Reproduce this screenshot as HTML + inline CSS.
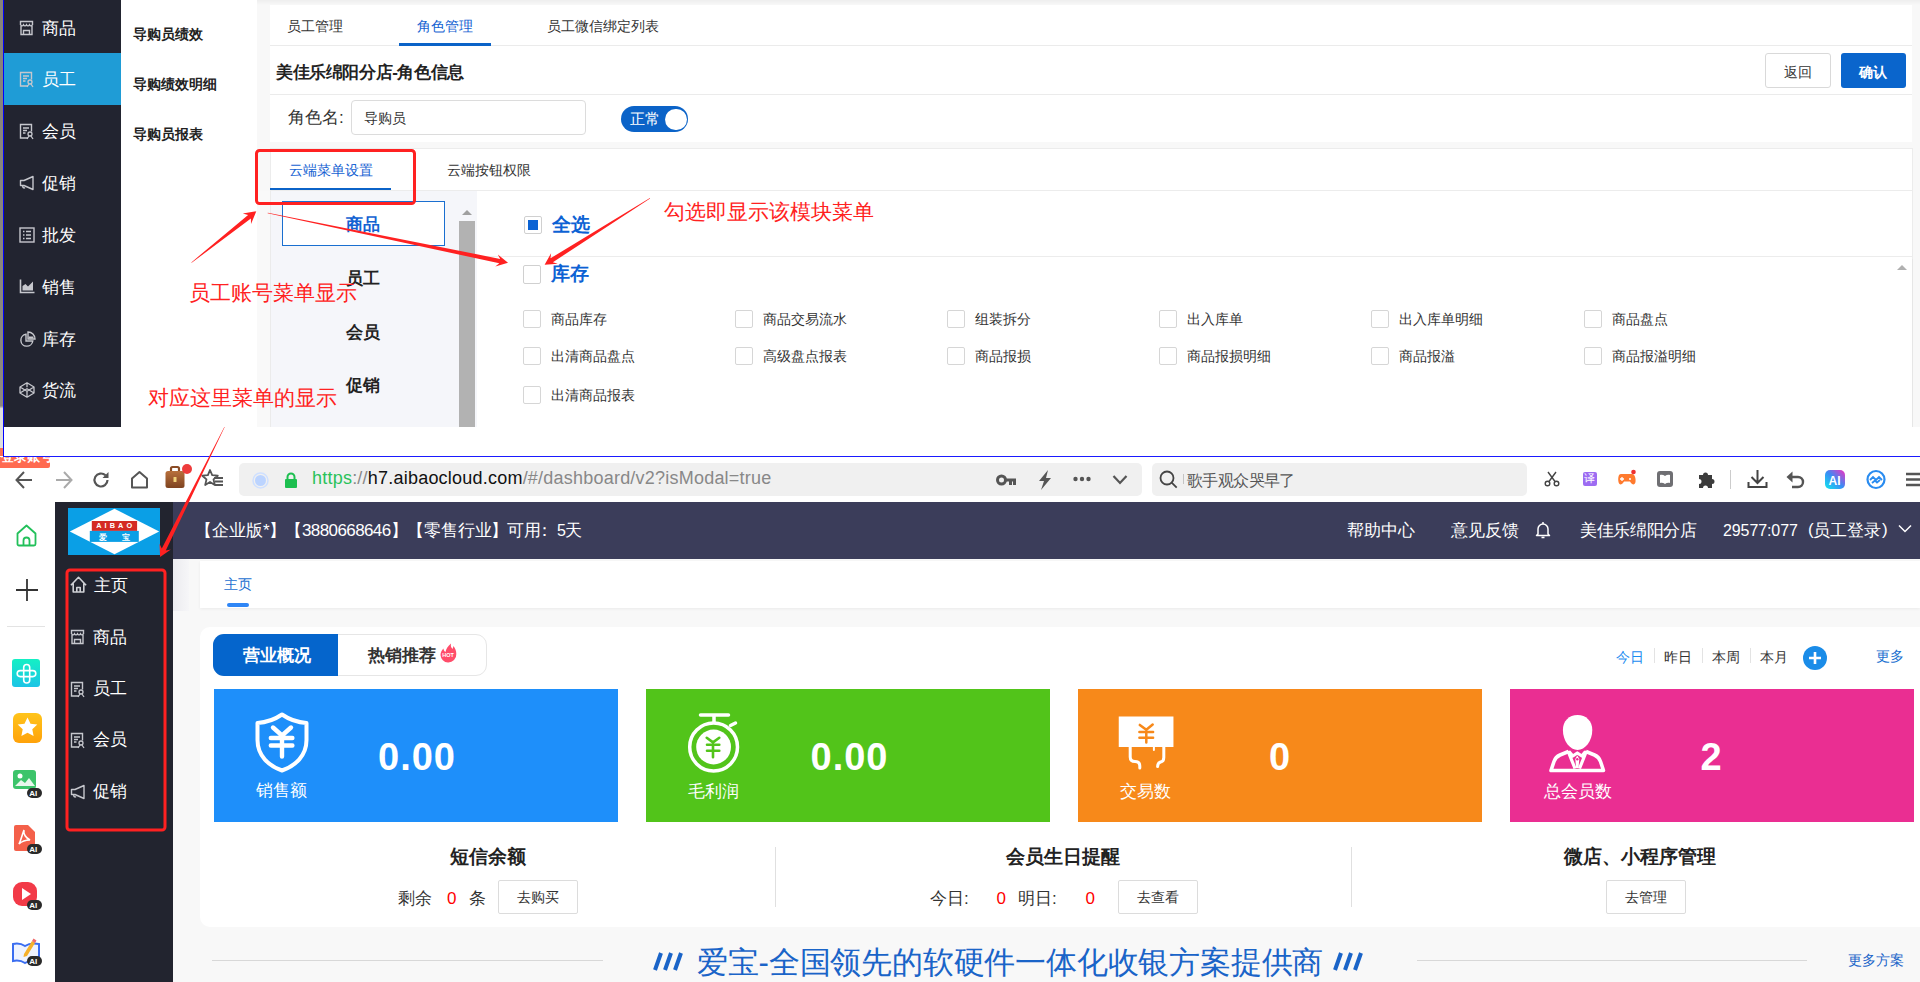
<!DOCTYPE html>
<html><head><meta charset="utf-8">
<style>
*{box-sizing:border-box;margin:0;padding:0}
html,body{width:1920px;height:982px;overflow:hidden;background:#fff;font-family:"Liberation Sans",sans-serif;color:#333}
.a{position:absolute;white-space:nowrap}
.t{position:absolute;white-space:nowrap;line-height:1}
svg{position:absolute;overflow:visible}
</style></head><body>

<!-- ============ TOP SCREENSHOT ============ -->
<div class="a" style="left:0;top:0;width:3px;height:456px;background:linear-gradient(#86827a 0,#8c877e 89%,#dedede 89.6%,#dedede 98.2%,#ff6a50 98.2%)"></div>
<div class="a" style="left:3px;top:0;width:1px;height:457px;background:#0000ff"></div>
<div class="a" style="left:3px;top:456px;width:1917px;height:1px;background:#1a1aff"></div>

<!-- dark sidebar -->
<div class="a" style="left:4px;top:0;width:117px;height:427px;background:#222430"></div>
<div class="a" style="left:4px;top:53px;width:117px;height:52px;background:#1f9cd6"></div>
<svg style="left:19px;top:20px" width="16" height="16" viewBox="0 0 16 16"><path d="M1.5 1.5h12v3.2c-1 1.6-2.2 1.6-3 0-0.8 1.6-2.2 1.6-3 0-0.8 1.6-2.2 1.6-3 0-0.8 1.6-2 1.6-3 0z M2 6v8.5h11V6 M4.5 14.5v-4h6v4" fill="none" stroke="#c6c7cd" stroke-width="1.4"/></svg>
<div class="t" style="left:42px;top:20px;font-size:17px;color:#fff">商品</div>
<svg style="left:19px;top:71px" width="16" height="16" viewBox="0 0 16 16"><path d="M9 15H1.5V1.5h11v7 M4 5h6 M4 7.5h4 M4 10h2.5" fill="none" stroke="#c6c7cd" stroke-width="1.4"/><circle cx="11" cy="11" r="2" fill="none" stroke="#c6c7cd" stroke-width="1.3"/><path d="M8 16l2-3 M14 16l-2-3" stroke="#c6c7cd" stroke-width="1.3"/></svg>
<div class="t" style="left:42px;top:71px;font-size:17px;color:#fff">员工</div>
<svg style="left:19px;top:123px" width="16" height="16" viewBox="0 0 16 16"><path d="M9 15H1.5V1.5h11v7 M4 5h6 M4 7.5h4 M4 10h2.5" fill="none" stroke="#c6c7cd" stroke-width="1.4"/><circle cx="11" cy="11" r="2" fill="none" stroke="#c6c7cd" stroke-width="1.3"/><path d="M8 16l2-3 M14 16l-2-3" stroke="#c6c7cd" stroke-width="1.3"/></svg>
<div class="t" style="left:42px;top:123px;font-size:17px;color:#fff">会员</div>
<svg style="left:19px;top:175px" width="16" height="16" viewBox="0 0 16 16"><path d="M1.5 5.5h3.5L14 1.5v13L5 10.5H1.5z M4 10.5c-1 2 1 3 2 2" fill="none" stroke="#c6c7cd" stroke-width="1.4" stroke-linejoin="round"/></svg>
<div class="t" style="left:42px;top:175px;font-size:17px;color:#fff">促销</div>
<svg style="left:19px;top:227px" width="16" height="16" viewBox="0 0 16 16"><rect x="1" y="1" width="14" height="14" fill="none" stroke="#c6c7cd" stroke-width="1.4"/><path d="M4 4.5h1.5M7 4.5h5M4 8h1.5M7 8h5M4 11.5h1.5M7 11.5h5" stroke="#c6c7cd" stroke-width="1.4"/></svg>
<div class="t" style="left:42px;top:227px;font-size:17px;color:#fff">批发</div>
<svg style="left:19px;top:279px" width="16" height="16" viewBox="0 0 16 16"><path d="M1.5 0.5v13h14" fill="none" stroke="#c6c7cd" stroke-width="1.6"/><path d="M3.5 11.5V7l3-2 2.5 2.5 2-2 3-3v9z" fill="#c6c7cd"/></svg>
<div class="t" style="left:42px;top:279px;font-size:17px;color:#fff">销售</div>
<svg style="left:19px;top:331px" width="16" height="16" viewBox="0 0 16 16"><path d="M7 3.2A6 6 0 1 0 13.8 10H7z" fill="none" stroke="#c6c7cd" stroke-width="1.4"/><path d="M9 1v7h7A7 7 0 0 0 9 1z" fill="none" stroke="#c6c7cd" stroke-width="1.4"/><path d="M9.5 5.5h5v2h-5z" fill="#c6c7cd"/></svg>
<div class="t" style="left:42px;top:331px;font-size:17px;color:#fff">库存</div>
<svg style="left:19px;top:382px" width="16" height="16" viewBox="0 0 16 16"><path d="M8 0.8l7 4.2v6L8 15.2 1 11V5z M1 5l7 4.2 7-4.2 M8 0.8v4.5 M1 11l7-4.3 7 4.3 M8 9.2v6" fill="none" stroke="#c6c7cd" stroke-width="1.3" stroke-linejoin="round"/></svg>
<div class="t" style="left:42px;top:382px;font-size:17px;color:#fff">货流</div>

<!-- submenu -->
<div class="t" style="left:133px;top:27px;font-size:14px;color:#222;font-weight:bold">导购员绩效</div>
<div class="t" style="left:133px;top:77px;font-size:14px;color:#222;font-weight:bold">导购绩效明细</div>
<div class="t" style="left:133px;top:127px;font-size:14px;color:#222;font-weight:bold">导购员报表</div>

<!-- gray content bg -->
<div class="a" style="left:257px;top:0;width:1663px;height:427px;background:#f8f8f8"></div>
<div class="a" style="left:257px;top:0;width:1663px;height:5px;background:linear-gradient(#eee,#f8f8f8)"></div>

<!-- panel 1 -->
<div class="a" style="left:270px;top:5px;width:1642px;height:137px;background:#fff"></div>
<div class="a" style="left:270px;top:45px;width:1642px;height:1px;background:#ebebeb"></div>
<div class="a" style="left:270px;top:94px;width:1642px;height:1px;background:#ebebeb"></div>
<div class="t" style="left:287px;top:19px;font-size:14px;color:#333">员工管理</div>
<div class="t" style="left:417px;top:19px;font-size:14px;color:#1462d2">角色管理</div>
<div class="t" style="left:547px;top:19px;font-size:14px;color:#333">员工微信绑定列表</div>
<div class="a" style="left:399px;top:43px;width:92px;height:3px;background:#0b63c8"></div>
<div class="t" style="left:276px;top:63.5px;font-size:17px;letter-spacing:-0.4px;color:#222;font-weight:bold">美佳乐绵阳分店-角色信息</div>
<div class="a" style="left:1765px;top:53px;width:66px;height:35px;border:1px solid #d9d9d9;border-radius:3px;background:#fff"></div>
<div class="t" style="left:1783.5px;top:64.5px;font-size:14px;color:#333">返回</div>
<div class="a" style="left:1841px;top:53px;width:65px;height:35px;border-radius:3px;background:#0a65cc"></div>
<div class="t" style="left:1858.5px;top:64.5px;font-size:14px;color:#fff;font-weight:600">确认</div>
<div class="t" style="left:288px;top:109px;font-size:17px;color:#333">角色名:</div>
<div class="a" style="left:351px;top:100px;width:235px;height:35px;border:1px solid #dcdcdc;border-radius:4px;background:#fff"></div>
<div class="t" style="left:364px;top:111px;font-size:14px;color:#333">导购员</div>
<div class="a" style="left:621px;top:106px;width:67px;height:26px;border-radius:13px;background:#0b63c8"></div>
<div class="a" style="left:665px;top:108.5px;width:21.5px;height:21.5px;border-radius:11px;background:#fff"></div>
<div class="t" style="left:629.5px;top:111px;font-size:15px;color:#fff">正常</div>

<!-- panel 2 -->
<div class="a" style="left:270px;top:148px;width:1643px;height:279px;background:#fff;border:1px solid #ececec;border-bottom:none"></div>
<div class="a" style="left:270px;top:190px;width:1642px;height:1px;background:#ececec"></div>
<div class="t" style="left:289px;top:162.5px;font-size:14px;color:#1462d2">云端菜单设置</div>
<div class="t" style="left:447px;top:162.5px;font-size:14px;color:#333">云端按钮权限</div>
<div class="a" style="left:270px;top:188px;width:121px;height:2px;background:#0b63c8"></div>
<!-- left module list -->
<div class="a" style="left:257px;top:191px;width:13px;height:236px;background:#f9f9f9"></div>
<div class="a" style="left:270px;top:191px;width:207px;height:236px;background:#f5f6fa;border-left:1px solid #ebebeb"></div>
<div class="a" style="left:282px;top:201px;width:163px;height:45px;border:1px solid #1a6fd0;background:#fff"></div>
<div class="t" style="left:346px;top:216px;font-size:17px;color:#1462d2;font-weight:bold">商品</div>
<div class="t" style="left:346px;top:270px;font-size:17px;color:#222;font-weight:bold">员工</div>
<div class="t" style="left:346px;top:324px;font-size:17px;color:#222;font-weight:bold">会员</div>
<div class="t" style="left:346px;top:377px;font-size:17px;color:#222;font-weight:bold">促销</div>
<div class="a" style="left:459px;top:221px;width:16px;height:206px;background:#b2b2b2"></div>
<svg style="left:459px;top:205px" width="16" height="12"><path d="M3 10 L8 5 L13 10Z" fill="#a0a0a0"/></svg>

<div class="a" style="left:524px;top:216px;width:18px;height:18px;border:1px solid #d0d0d0;border-radius:2px;background:#fff"></div>
<div class="a" style="left:528px;top:220px;width:10px;height:10px;background:#0b63d4"></div>
<div class="t" style="left:552px;top:215px;font-size:19px;color:#0d62d4;font-weight:bold">全选</div>
<div class="a" style="left:477px;top:256px;width:1435px;height:1px;background:#ececec"></div>
<div class="a" style="left:523px;top:265px;width:18px;height:19px;border:1px solid #d0d0d0;border-radius:2px;background:#fff"></div>
<div class="t" style="left:551px;top:264px;font-size:19px;color:#0d62d4;font-weight:bold">库存</div>
<div class="a" style="left:523px;top:310px;width:18px;height:18px;border:1px solid #d6d6d6;border-radius:2px;background:#fff"></div>
<div class="t" style="left:551px;top:312px;font-size:14px;color:#333">商品库存</div>
<div class="a" style="left:735px;top:310px;width:18px;height:18px;border:1px solid #d6d6d6;border-radius:2px;background:#fff"></div>
<div class="t" style="left:763px;top:312px;font-size:14px;color:#333">商品交易流水</div>
<div class="a" style="left:947px;top:310px;width:18px;height:18px;border:1px solid #d6d6d6;border-radius:2px;background:#fff"></div>
<div class="t" style="left:975px;top:312px;font-size:14px;color:#333">组装拆分</div>
<div class="a" style="left:1159px;top:310px;width:18px;height:18px;border:1px solid #d6d6d6;border-radius:2px;background:#fff"></div>
<div class="t" style="left:1187px;top:312px;font-size:14px;color:#333">出入库单</div>
<div class="a" style="left:1371px;top:310px;width:18px;height:18px;border:1px solid #d6d6d6;border-radius:2px;background:#fff"></div>
<div class="t" style="left:1399px;top:312px;font-size:14px;color:#333">出入库单明细</div>
<div class="a" style="left:1584px;top:310px;width:18px;height:18px;border:1px solid #d6d6d6;border-radius:2px;background:#fff"></div>
<div class="t" style="left:1612px;top:312px;font-size:14px;color:#333">商品盘点</div>
<div class="a" style="left:523px;top:347px;width:18px;height:18px;border:1px solid #d6d6d6;border-radius:2px;background:#fff"></div>
<div class="t" style="left:551px;top:349px;font-size:14px;color:#333">出清商品盘点</div>
<div class="a" style="left:735px;top:347px;width:18px;height:18px;border:1px solid #d6d6d6;border-radius:2px;background:#fff"></div>
<div class="t" style="left:763px;top:349px;font-size:14px;color:#333">高级盘点报表</div>
<div class="a" style="left:947px;top:347px;width:18px;height:18px;border:1px solid #d6d6d6;border-radius:2px;background:#fff"></div>
<div class="t" style="left:975px;top:349px;font-size:14px;color:#333">商品报损</div>
<div class="a" style="left:1159px;top:347px;width:18px;height:18px;border:1px solid #d6d6d6;border-radius:2px;background:#fff"></div>
<div class="t" style="left:1187px;top:349px;font-size:14px;color:#333">商品报损明细</div>
<div class="a" style="left:1371px;top:347px;width:18px;height:18px;border:1px solid #d6d6d6;border-radius:2px;background:#fff"></div>
<div class="t" style="left:1399px;top:349px;font-size:14px;color:#333">商品报溢</div>
<div class="a" style="left:1584px;top:347px;width:18px;height:18px;border:1px solid #d6d6d6;border-radius:2px;background:#fff"></div>
<div class="t" style="left:1612px;top:349px;font-size:14px;color:#333">商品报溢明细</div>
<div class="a" style="left:523px;top:386px;width:18px;height:18px;border:1px solid #d6d6d6;border-radius:2px;background:#fff"></div>
<div class="t" style="left:551px;top:388px;font-size:14px;color:#333">出清商品报表</div>
<div class="a" style="left:1912px;top:259px;width:1px;height:168px;background:#e6e6e6"></div>
<svg style="left:1895px;top:262px" width="14" height="10"><path d="M2 8 L7 3 L12 8Z" fill="#b0b0b0"/></svg>

<!-- ============ BROWSER ============ -->
<div class="a" style="left:0;top:457px;width:1920px;height:45px;background:#fff"></div>
<div class="a" style="left:0;top:457px;width:50px;height:10.5px;background:#ff6a50;border-radius:0 0 2px 0;overflow:hidden"><div class="t" style="left:1px;top:-6px;font-size:12.5px;font-weight:bold;color:#fff">登录账号</div></div>
<!-- nav icons -->
<svg style="left:14px;top:469px" width="20" height="22" viewBox="0 0 20 22"><path d="M18 11H3 M10 3L2.5 11l7.5 8" fill="none" stroke="#555" stroke-width="2"/></svg>
<svg style="left:54px;top:469px" width="20" height="22" viewBox="0 0 20 22"><path d="M2 11h15 M10 3l7.5 8L10 19" fill="none" stroke="#aaa" stroke-width="2"/></svg>
<svg style="left:91px;top:470px" width="20" height="20" viewBox="0 0 20 20"><path d="M16.5 10a6.5 6.5 0 1 1-2-4.7" fill="none" stroke="#555" stroke-width="2.2"/><path d="M17.5 2v6h-6z" fill="#555"/></svg>
<svg style="left:130px;top:470px" width="20" height="20" viewBox="0 0 20 20"><path d="M2 8.5L9.5 2 17 8.5V17.5H2z" fill="none" stroke="#555" stroke-width="2" stroke-linejoin="round"/></svg>
<svg style="left:164px;top:463px" width="30" height="28" viewBox="0 0 30 28"><defs><linearGradient id="bc" x1="0" y1="0" x2="0" y2="1"><stop offset="0" stop-color="#b8703c"/><stop offset="1" stop-color="#7e4320"/></linearGradient></defs><path d="M7 9V5.5Q7 4 8.5 4h5Q15 4 15 5.5V9" fill="none" stroke="#8a4c26" stroke-width="2.2"/><rect x="1.5" y="8" width="19" height="17" rx="2.5" fill="url(#bc)"/><rect x="9.5" y="14" width="3" height="5" rx="0.5" fill="#f2d27a"/><circle cx="23" cy="6" r="5" fill="#ee3b3b"/></svg>
<svg style="left:202px;top:469px" width="22" height="20" viewBox="0 0 22 20"><path d="M8 1l2.2 5.2 5.6.5-4.3 3.7 1.3 5.6L8 13 3.2 16l1.3-5.6L0.3 6.7l5.6-.5z" fill="none" stroke="#555" stroke-width="1.8" stroke-linejoin="round"/><path d="M12 9h9 M13 12.5h8 M13 16h8" stroke="#555" stroke-width="2"/></svg>
<!-- url bar -->
<div class="a" style="left:239px;top:463px;width:903px;height:33px;background:#f0f0f0;border-radius:5px"></div>
<svg style="left:252px;top:472px" width="17" height="17" viewBox="0 0 17 17"><circle cx="8.5" cy="8.5" r="7.5" fill="none" stroke="#cfe0ff" stroke-width="1.5"/><circle cx="8.5" cy="8.5" r="5.5" fill="#bcd4ff"/></svg>
<svg style="left:284px;top:472px" width="14" height="16" viewBox="0 0 14 16"><path d="M3.5 7V5a3.5 3.5 0 0 1 7 0v2" fill="none" stroke="#1dbf50" stroke-width="2"/><rect x="1" y="7" width="12" height="9" rx="1" fill="#1dbf50"/></svg>
<div class="t" style="left:312px;top:469px;font-size:18px;letter-spacing:0.22px"><span style="color:#2ac25a">https</span><span style="color:#888">://</span><span style="color:#111">h7.aibaocloud.com</span><span style="color:#888">/#/dashboard/v2?isModal=true</span></div>
<svg style="left:996px;top:474px" width="21" height="12" viewBox="0 0 21 12"><circle cx="5.5" cy="6" r="4" fill="none" stroke="#555" stroke-width="3"/><path d="M9 6h11 M14.5 6v5 M18.5 6v5" stroke="#555" stroke-width="3"/></svg>
<svg style="left:1037px;top:470px" width="16" height="20" viewBox="0 0 16 20"><path d="M11 0L2 11h5l-3 9 10-12H9z" fill="#555"/></svg>
<svg style="left:1073px;top:475px" width="18" height="8" viewBox="0 0 18 8"><circle cx="2.5" cy="4" r="2.2" fill="#555"/><circle cx="9" cy="4" r="2.2" fill="#555"/><circle cx="15.5" cy="4" r="2.2" fill="#555"/></svg>
<svg style="left:1112px;top:474px" width="16" height="12" viewBox="0 0 16 12"><path d="M1.5 2l6.5 7 6.5-7" fill="none" stroke="#555" stroke-width="2.2"/></svg>
<!-- search -->
<div class="a" style="left:1152px;top:463px;width:375px;height:33px;background:#f0f0f0;border-radius:5px"></div>
<svg style="left:1159px;top:470px" width="20" height="20" viewBox="0 0 20 20"><circle cx="8" cy="8" r="6.5" fill="none" stroke="#444" stroke-width="1.8"/><path d="M12.7 12.7l5 5" stroke="#444" stroke-width="1.8"/></svg>
<div class="a" style="left:1183px;top:474px;width:1px;height:10px;background:#c4c4c4"></div>
<div class="t" style="left:1187px;top:472.5px;font-size:16px;letter-spacing:-0.6px;color:#555">歌手观众哭早了</div>
<!-- right toolbar icons -->
<svg style="left:1544px;top:471px" width="16" height="16" viewBox="0 0 16 16"><circle cx="3.5" cy="12.5" r="2.3" fill="none" stroke="#444" stroke-width="1.4"/><circle cx="12.5" cy="12.5" r="2.3" fill="none" stroke="#444" stroke-width="1.4"/><path d="M5 10.5L12 1 M11 10.5L4 1" stroke="#444" stroke-width="1.4"/></svg>
<div class="a" style="left:1583px;top:472px;width:14px;height:14px;background:#9d6cf2;border-radius:2px"></div>
<div class="t" style="left:1584px;top:473px;font-size:11px;color:#fff">译</div>
<svg style="left:1617px;top:469px" width="20" height="18" viewBox="0 0 20 18"><path d="M4 5h11c3 0 4 5 3.5 8-.5 3-3 3-4.5 1l-1-1.5H7L6 14c-1.5 2-4 2-4.5-1C1 10 1 5 4 5z" fill="#ff7a2e"/><path d="M5 8v4 M3 10h4" stroke="#fff" stroke-width="1.3"/><circle cx="13" cy="10" r="1" fill="#fff"/><circle cx="16.5" cy="3" r="2.3" fill="#ee3030"/></svg>
<svg style="left:1657px;top:471px" width="16" height="16" viewBox="0 0 16 16"><rect x="0" y="0" width="16" height="16" rx="3" fill="#6f6f73"/><path d="M3 4c2-.5 3.5 0 5 1 1.5-1 3-1.5 5-1v8c-2-.5-3.5 0-5 1-1.5-1-3-1.5-5-1z" fill="#fff"/></svg>
<svg style="left:1696px;top:470px" width="19" height="19" viewBox="0 0 19 19"><path d="M3 5h4a2.5 2.5 0 1 1 5 0h4v4a2.5 2.5 0 1 1 0 5v4h-4a2.5 2.5 0 1 0-5 0H3v-4a2.5 2.5 0 1 0 0-5z" fill="#3c3c3c"/></svg>
<div class="a" style="left:1730px;top:470px;width:1px;height:19px;background:#ccc"></div>
<svg style="left:1747px;top:469px" width="21" height="20" viewBox="0 0 21 20"><path d="M10.5 1v12 M4.5 8l6 6 6-6 M1.5 13v5h18v-5" fill="none" stroke="#444" stroke-width="2"/></svg>
<svg style="left:1786px;top:470px" width="19" height="19" viewBox="0 0 19 19"><path d="M5 7h7a5 5 0 0 1 0 10H6" fill="none" stroke="#555" stroke-width="2.4"/><path d="M6.5 1.5v11L0.5 7z" fill="#555"/></svg>
<svg style="left:1825px;top:470px" width="20" height="19" viewBox="0 0 20 19"><defs><linearGradient id="ai" x1="0" y1="1" x2="1" y2="0"><stop offset="0" stop-color="#10e8ee"/><stop offset="0.5" stop-color="#3a8cf5"/><stop offset="1" stop-color="#f62fc0"/></linearGradient></defs><rect width="20" height="19" rx="5" fill="url(#ai)"/><text x="3.5" y="14.5" font-family="Liberation Sans" font-weight="bold" font-size="12" fill="#fff">AI</text></svg>
<svg style="left:1866px;top:470px" width="20" height="19" viewBox="0 0 20 19"><circle cx="10" cy="9.5" r="8.5" fill="none" stroke="#2a8cf0" stroke-width="2.2"/><path d="M4 10l3-3 3 3 3-3 3 3 M6 13l3-2.5 2 2 3-2.5" fill="none" stroke="#2a8cf0" stroke-width="1.8"/></svg>
<svg style="left:1906px;top:472px" width="14" height="15" viewBox="0 0 14 15"><path d="M0 2h14 M0 7.5h14 M0 13h14" stroke="#555" stroke-width="2.4"/></svg>

<!-- browser left sidebar -->
<div class="a" style="left:0;top:502px;width:55px;height:480px;background:#fff"></div>
<svg style="left:16px;top:524px" width="21" height="23" viewBox="0 0 21 23"><path d="M1.5 9.5L10.5 1.5l9 8V20a1.5 1.5 0 0 1-1.5 1.5H3A1.5 1.5 0 0 1 1.5 20z M7.5 21.5v-5a3 3 0 0 1 6 0v5" fill="none" stroke="#22c05a" stroke-width="1.8" stroke-linejoin="round"/></svg>
<svg style="left:16px;top:579px" width="22" height="22" viewBox="0 0 22 22"><path d="M11 0v22 M0 11h22" stroke="#333" stroke-width="1.8"/></svg>
<div class="a" style="left:7px;top:626px;width:38px;height:1px;background:#e3e3e3"></div>
<svg style="left:12px;top:659px" width="28" height="28" viewBox="0 0 28 28"><defs><linearGradient id="tl" x1="0" y1="0" x2="0" y2="1"><stop offset="0" stop-color="#14f0c4"/><stop offset="1" stop-color="#1cc4e6"/></linearGradient></defs><rect width="28" height="28" rx="3" fill="url(#tl)"/><rect x="11.7" y="5.5" width="6" height="18.5" rx="3" fill="none" stroke="#fff" stroke-width="1.6"/><rect x="5.2" y="11.6" width="18.6" height="6" rx="3" fill="none" stroke="#fff" stroke-width="1.6"/></svg>
<svg style="left:13px;top:713px" width="29" height="30" viewBox="0 0 29 30"><defs><linearGradient id="st" x1="0" y1="0" x2="0" y2="1"><stop offset="0" stop-color="#ffc41a"/><stop offset="1" stop-color="#ffa20a"/></linearGradient></defs><rect width="29" height="30" rx="6" fill="url(#st)"/><path d="M14.5 4.5l3 6.3 6.8.8-5 4.7 1.3 6.8-6.1-3.4-6.1 3.4 1.3-6.8-5-4.7 6.8-.8z" fill="#fff"/></svg>
<svg style="left:12px;top:769px" width="31" height="31" viewBox="0 0 31 31"><rect x="1" y="1" width="23" height="19" rx="3" fill="#3cc46a"/><circle cx="8" cy="7" r="2.5" fill="#fff"/><path d="M3 17l6-6 4 3 4-5 6 8z" fill="#e8f7ec"/><rect x="15" y="19" width="15" height="10" rx="5" fill="#2a2a2a"/><text x="17.3" y="27.3" font-family="Liberation Sans" font-weight="bold" font-size="8" fill="#fff">AI</text></svg>
<svg style="left:12px;top:825px" width="31" height="31" viewBox="0 0 31 31"><path d="M4 0h12l7 7v17a2 2 0 0 1-2 2H4a2 2 0 0 1-2-2V2a2 2 0 0 1 2-2z" fill="#f4604a"/><path d="M12 5c-1 4 2 8 6 10-4 0-8 1-11 4 2-4 3-9 5-14z" fill="none" stroke="#fff" stroke-width="1.6"/><rect x="15" y="19" width="15" height="10" rx="5" fill="#2a2a2a"/><text x="17.3" y="27.3" font-family="Liberation Sans" font-weight="bold" font-size="8" fill="#fff">AI</text></svg>
<svg style="left:12px;top:881px" width="31" height="31" viewBox="0 0 31 31"><rect x="1" y="1" width="24" height="24" rx="9" fill="#f23a48"/><path d="M10 7l9 6-9 6z" fill="#fff"/><rect x="15" y="19" width="15" height="10" rx="5" fill="#2a2a2a"/><text x="17.3" y="27.3" font-family="Liberation Sans" font-weight="bold" font-size="8" fill="#fff">AI</text></svg>
<svg style="left:12px;top:937px" width="31" height="31" viewBox="0 0 31 31"><path d="M1 7c5-1 9 0 12 2 3-2 8-3 14-2v17c-6-1-11 0-14 2-3-2-7-3-12-2z" fill="#eef3ff" stroke="#3a6df0" stroke-width="2"/><path d="M12 17l8-13 3 2-8 13-3.5 1z" fill="#f5b02a"/><path d="M20 4l1.5-2.5 3 2L23 6z" fill="#f06a6a"/><rect x="15" y="19" width="15" height="10" rx="5" fill="#2a2a2a"/><text x="17.3" y="27.3" font-family="Liberation Sans" font-weight="bold" font-size="8" fill="#fff">AI</text></svg>

<!-- app sidebar -->
<div class="a" style="left:55px;top:502px;width:118px;height:480px;background:#22242f"></div>
<!-- logo -->
<svg style="left:68px;top:508px" width="92" height="47" viewBox="0 0 92 47"><rect width="92" height="47" fill="#0a9fe6"/><path d="M1.8 23.5L46.5 0.8 91.2 23.5 46.5 46.2z" fill="#fff"/><rect x="23.8" y="13" width="45.3" height="9.9" fill="#d42a24"/><rect x="21.8" y="22.9" width="49" height="11" fill="#0a9fe6"/><text x="28.2" y="20.3" textLength="36" lengthAdjust="spacing" font-family="Liberation Sans" font-weight="bold" font-size="7.3" fill="#fff">AIBAO</text><text x="31" y="31.6" font-family="Liberation Sans" font-weight="bold" font-size="7.5" fill="#fff">爱</text><text x="54" y="31.6" font-family="Liberation Sans" font-weight="bold" font-size="7.5" fill="#fff">宝</text></svg>
<svg style="left:70px;top:576px" width="17" height="17" viewBox="0 0 17 17"><path d="M0.9 9.3L8.5 1.3 16.1 9.3 M3.2 7.5v8.5h10.6V7.5 M6.8 16v-4.5h3.4V16" fill="none" stroke="#d0d1d6" stroke-width="1.6" stroke-linejoin="round"/></svg>
<div class="t" style="left:93.5px;top:577px;font-size:17px;color:#fff">主页</div>
<svg style="left:70px;top:629px" width="16" height="16" viewBox="0 0 16 16"><path d="M1.5 1.5h12v3.2c-1 1.6-2.2 1.6-3 0-0.8 1.6-2.2 1.6-3 0-0.8 1.6-2.2 1.6-3 0-0.8 1.6-2 1.6-3 0z M2 6v8.5h11V6 M4.5 14.5v-4h6v4" fill="none" stroke="#c6c7cd" stroke-width="1.4"/></svg>
<div class="t" style="left:93px;top:629px;font-size:17px;color:#fff">商品</div>
<svg style="left:70px;top:681px" width="16" height="16" viewBox="0 0 16 16"><path d="M9 15H1.5V1.5h11v7 M4 5h6 M4 7.5h4 M4 10h2.5" fill="none" stroke="#c6c7cd" stroke-width="1.4"/><circle cx="11" cy="11" r="2" fill="none" stroke="#c6c7cd" stroke-width="1.3"/><path d="M8 16l2-3 M14 16l-2-3" stroke="#c6c7cd" stroke-width="1.3"/></svg>
<div class="t" style="left:93px;top:680px;font-size:17px;color:#fff">员工</div>
<svg style="left:70px;top:732px" width="16" height="16" viewBox="0 0 16 16"><path d="M9 15H1.5V1.5h11v7 M4 5h6 M4 7.5h4 M4 10h2.5" fill="none" stroke="#c6c7cd" stroke-width="1.4"/><circle cx="11" cy="11" r="2" fill="none" stroke="#c6c7cd" stroke-width="1.3"/><path d="M8 16l2-3 M14 16l-2-3" stroke="#c6c7cd" stroke-width="1.3"/></svg>
<div class="t" style="left:93px;top:731px;font-size:17px;color:#fff">会员</div>
<svg style="left:70px;top:784px" width="16" height="16" viewBox="0 0 16 16"><path d="M1.5 5.5h3.5L14 1.5v13L5 10.5H1.5z M4 10.5c-1 2 1 3 2 2" fill="none" stroke="#c6c7cd" stroke-width="1.4" stroke-linejoin="round"/></svg>
<div class="t" style="left:93px;top:783px;font-size:17px;color:#fff">促销</div>

<!-- header -->
<div class="a" style="left:173px;top:502px;width:1747px;height:57px;background:#3b3d5a"></div>
<div class="t" style="left:195.3px;top:522px;font-size:17px;color:#fff">【</div>
<div class="t" style="left:212px;top:522px;font-size:17px;color:#fff">企业版*</div>
<div class="t" style="left:269px;top:522px;font-size:17px;color:#fff">】</div>
<div class="t" style="left:285px;top:522px;font-size:17px;color:#fff">【</div>
<div class="t" style="left:302px;top:522px;font-size:17px;letter-spacing:-0.6px;color:#fff">3880668646</div>
<div class="t" style="left:391px;top:522px;font-size:17px;color:#fff">】</div>
<div class="t" style="left:406.5px;top:522px;font-size:17px;color:#fff">【</div>
<div class="t" style="left:423.5px;top:522px;font-size:17px;color:#fff">零售行业</div>
<div class="t" style="left:491.4px;top:522px;font-size:17px;color:#fff">】</div>
<div class="t" style="left:507px;top:522px;font-size:17px;color:#fff">可用</div>
<div class="t" style="left:535.7px;top:522px;font-size:17px;color:#fff">：</div>
<div class="t" style="left:557px;top:523px;font-size:16px;color:#fff">5</div>
<div class="t" style="left:565px;top:522px;font-size:17px;color:#fff">天</div>
<div class="t" style="left:1347px;top:522px;font-size:17px;color:#fff">帮助中心</div>
<div class="t" style="left:1450.5px;top:522px;font-size:17px;color:#fff">意见反馈</div>
<svg style="left:1535px;top:521px" width="16" height="18" viewBox="0 0 16 18"><path d="M3 13V8a5 5 0 0 1 10 0v5l1.5 1.5h-13z M6.5 16.5h3" fill="none" stroke="#fff" stroke-width="1.5" stroke-linejoin="round"/><path d="M8 1v2" stroke="#fff" stroke-width="1.5"/></svg>
<div class="t" style="left:1580px;top:522px;font-size:17px;letter-spacing:-0.33px;color:#fff">美佳乐绵阳分店</div>
<div class="t" style="left:1723px;top:523px;font-size:16px;letter-spacing:-0.1px;color:#fff">29577:077</div>
<div class="t" style="left:1808px;top:521px;font-size:17px;color:#fff">(</div>
<div class="t" style="left:1813px;top:522px;font-size:17px;color:#fff">员工登录</div>
<div class="t" style="left:1882px;top:521px;font-size:17px;color:#fff">)</div>
<svg style="left:1898px;top:524px" width="14" height="10" viewBox="0 0 14 10"><path d="M1 1.5l6 6 6-6" fill="none" stroke="#fff" stroke-width="1.5"/></svg>

<!-- main content -->
<div class="a" style="left:173px;top:559px;width:1747px;height:423px;background:#f8f8f8"></div>
<div class="a" style="left:173px;top:559px;width:16px;height:52px;background:linear-gradient(90deg,#ebebef,#f6f6f8)"></div>
<div class="a" style="left:200px;top:561px;width:1720px;height:47px;background:#fff;box-shadow:0 1px 3px rgba(0,0,0,0.06)"></div>
<div class="t" style="left:224px;top:577px;font-size:14px;color:#1a6fd0">主页</div>
<div class="a" style="left:227px;top:603px;width:22px;height:4px;border-radius:2px;background:#2f86f6"></div>

<div class="a" style="left:200px;top:627px;width:1730px;height:300px;background:#fff;border-radius:10px"></div>
<div class="a" style="left:213px;top:634px;width:274px;height:42px;border:1px solid #e6e6e6;border-radius:11px;background:#fff"></div>
<div class="a" style="left:213px;top:634px;width:125px;height:42px;border-radius:11px 0 0 11px;background:#0565cc"></div>
<div class="t" style="left:243px;top:647px;font-size:17px;color:#fff;font-weight:bold">营业概况</div>
<div class="t" style="left:368px;top:647px;font-size:17px;color:#333;font-weight:bold">热销推荐</div>
<svg style="left:439px;top:643px" width="18" height="20" viewBox="0 0 18 20"><path d="M9 19.5A8 8 0 0 1 1.5 12c0-3 1.5-5 3-6.5 0 2 1 3 2 3.5C7 6 9 3 12 0.5c-.5 2.5 0 4 1.5 5.5.5-1 .8-2 .8-3 2 2 3 5 3 8A8 8 0 0 1 9 19.5z" fill="#ff4d6a"/><text x="9" y="14" text-anchor="middle" font-family="Liberation Sans" font-weight="bold" font-size="5.5" fill="#fff">HOT</text></svg>

<div class="t" style="left:1616px;top:650px;font-size:14px;color:#1a8cf0">今日</div>
<div class="a" style="left:1654px;top:648px;width:1px;height:15px;background:#e3e3e3"></div>
<div class="t" style="left:1664px;top:650px;font-size:14px;color:#333">昨日</div>
<div class="a" style="left:1702px;top:648px;width:1px;height:15px;background:#e3e3e3"></div>
<div class="t" style="left:1712px;top:650px;font-size:14px;color:#333">本周</div>
<div class="a" style="left:1750px;top:648px;width:1px;height:15px;background:#e3e3e3"></div>
<div class="t" style="left:1760px;top:650px;font-size:14px;color:#333">本月</div>
<svg style="left:1803px;top:646px" width="24" height="24" viewBox="0 0 24 24"><circle cx="12" cy="12" r="12" fill="#1a8ce8"/><path d="M12 6v12 M6 12h12" stroke="#fff" stroke-width="2.6"/></svg>
<div class="t" style="left:1876px;top:649px;font-size:14px;color:#1a6fd0">更多</div>

<!-- stat cards -->
<div class="a" style="left:214px;top:689px;width:404px;height:133px;background:#1e8ffa"></div>
<div class="a" style="left:646px;top:689px;width:404px;height:133px;background:#52c41a"></div>
<div class="a" style="left:1078px;top:689px;width:404px;height:133px;background:#f7891a"></div>
<div class="a" style="left:1510px;top:689px;width:404px;height:133px;background:#ea2e92"></div>
<!-- shield -->
<svg style="left:255px;top:712px" width="54" height="61" viewBox="0 0 54 61"><path d="M27 2.5C19 8 11 10.5 2.5 11v17C2.5 44 14 54 27 58.5 40 54 51.5 44 51.5 28V11C43 10.5 35 8 27 2.5z" fill="none" stroke="#fff" stroke-width="4" stroke-linejoin="round"/><path d="M18 15.5l9 8 9-8 M15.8 26h21.6 M15.8 33.5h21.6 M27 23.5v21" fill="none" stroke="#fff" stroke-width="4.4" stroke-linecap="round" stroke-linejoin="round"/></svg>
<div class="t" style="left:256px;top:782px;font-size:17px;color:#fff">销售额</div>
<div class="t" style="left:378px;top:738px;font-size:38px;letter-spacing:1px;color:#fff;font-weight:bold">0.00</div>
<!-- stopwatch -->
<svg style="left:686px;top:712px" width="55" height="62" viewBox="0 0 55 62"><path d="M14.5 3h28 M28 3v7 M44.5 13.5l5-2.5" fill="none" stroke="#fff" stroke-width="3.5" stroke-linecap="round"/><circle cx="27.6" cy="35" r="23.9" fill="none" stroke="#fff" stroke-width="3.5"/><circle cx="27.6" cy="35" r="17.4" fill="#fff"/><path d="M20.7 25.8L27 30.4 33.3 25.8 M21 32.7h12.3 M21 38.8h12.3 M27 30.4v14.9" fill="none" stroke="#52c41a" stroke-width="2.6" stroke-linecap="round" stroke-linejoin="round"/></svg>
<div class="t" style="left:688px;top:783px;font-size:17px;color:#fff">毛利润</div>
<div class="t" style="left:810.5px;top:738px;font-size:38px;letter-spacing:1px;color:#fff;font-weight:bold">0.00</div>
<!-- card icon -->
<svg style="left:1117px;top:715px" width="58" height="56" viewBox="0 0 58 56"><rect x="1.75" y="1.5" width="54.7" height="30.5" fill="#fff"/><path d="M22.8 9.9L29.3 14.8 35.7 9.5 M22.4 17.1h13.7 M22.4 22.8h13.7 M29.3 14.8v12.6" fill="none" stroke="#f7891a" stroke-width="2.5" stroke-linecap="round" stroke-linejoin="round"/><path d="M13.2 32V42Q13.2 46.5 18 46.5Q22.8 46.5 22.8 51V53 M46.8 32V42.5Q46.8 46.5 43.5 47Q40.6 48 40.6 51.5" fill="none" stroke="#fff" stroke-width="3" stroke-linecap="round"/><path d="M36.9 32v3" stroke="#fff" stroke-width="2" stroke-linecap="round"/></svg>
<div class="t" style="left:1120px;top:783px;font-size:17px;color:#fff">交易数</div>
<div class="t" style="left:1269px;top:738px;font-size:38px;color:#fff;font-weight:bold">0</div>
<!-- person -->
<svg style="left:1547px;top:713px" width="62" height="62" viewBox="0 0 62 62"><path d="M30.6 2C39 2 45.3 8 45.3 17C45.3 28 38 37 30.6 37C23 37 15.9 28 15.9 17C15.9 8 22 2 30.6 2z" fill="#fff"/><path d="M21.5 38.5L13 42Q8.5 44 7 48.5L4 57.5H56.5L53.5 48.5Q52 44 47.5 42L39 38.5" fill="none" stroke="#fff" stroke-width="3.6" stroke-linejoin="round"/><path d="M21 38L28 55.5 M39.5 38L32.5 55.5 M22 38.5L25.8 43 30.3 40 34.8 43 38.5 38.5" fill="none" stroke="#fff" stroke-width="3.2" stroke-linejoin="round"/><path d="M28.3 46L30.3 42.5 32.3 46 31.5 55H29.1z" fill="#fff"/><circle cx="30.3" cy="46.3" r="1.2" fill="#ea2e92"/></svg>
<div class="t" style="left:1544px;top:783px;font-size:17px;color:#fff">总会员数</div>
<div class="t" style="left:1700.5px;top:738px;font-size:38px;color:#fff;font-weight:bold">2</div>

<!-- bottom row -->
<div class="t" style="left:450px;top:847px;font-size:19px;color:#222;font-weight:bold">短信余额</div>
<div class="t" style="left:398px;top:889.5px;font-size:17px;color:#333">剩余</div>
<div class="t" style="left:447px;top:889.5px;font-size:17px;color:#f00">0</div>
<div class="t" style="left:469px;top:889.5px;font-size:17px;color:#333">条</div>
<div class="a" style="left:498px;top:880px;width:80px;height:34px;border:1px solid #dcdcdc;border-radius:2px;background:#fff"></div>
<div class="t" style="left:517px;top:890px;font-size:14px;color:#333">去购买</div>
<div class="a" style="left:775px;top:847px;width:1px;height:60px;background:#e0e0e0"></div>

<div class="t" style="left:1006px;top:847px;font-size:19px;color:#222;font-weight:bold">会员生日提醒</div>
<div class="t" style="left:930px;top:889.5px;font-size:17px;color:#333">今日:</div>
<div class="t" style="left:996.5px;top:889.5px;font-size:17px;color:#f00">0</div>
<div class="t" style="left:1018px;top:889.5px;font-size:17px;color:#333">明日:</div>
<div class="t" style="left:1085.5px;top:889.5px;font-size:17px;color:#f00">0</div>
<div class="a" style="left:1118px;top:880px;width:80px;height:34px;border:1px solid #dcdcdc;border-radius:2px;background:#fff"></div>
<div class="t" style="left:1137px;top:890px;font-size:14px;color:#333">去查看</div>
<div class="a" style="left:1351px;top:847px;width:1px;height:60px;background:#e0e0e0"></div>

<div class="t" style="left:1563.5px;top:847px;font-size:19px;color:#222;font-weight:bold">微店、小程序管理</div>
<div class="a" style="left:1606px;top:880px;width:80px;height:34px;border:1px solid #dcdcdc;border-radius:2px;background:#fff"></div>
<div class="t" style="left:1625px;top:890px;font-size:14px;color:#333">去管理</div>

<!-- footer -->
<div class="a" style="left:212px;top:960px;width:391px;height:1px;background:#d8d8d8"></div>
<div class="a" style="left:1417px;top:960px;width:390px;height:1px;background:#d8d8d8"></div>
<svg style="left:654px;top:952px" width="33" height="19" viewBox="0 0 33 19"><path d="M7 1L1 18 M17 1L11 18 M27 1L21 18" stroke="#1a64c8" stroke-width="4"/></svg>
<div class="t" style="left:697px;top:946.5px;font-size:31px;letter-spacing:-0.2px;color:#1a64c8">爱宝-全国领先的软硬件一体化收银方案提供商</div>
<svg style="left:1333px;top:952px" width="33" height="19" viewBox="0 0 33 19"><path d="M8 1L2 18 M18 1L12 18 M28 1L22 18" stroke="#1a64c8" stroke-width="4"/></svg>
<div class="t" style="left:1848px;top:953px;font-size:14px;color:#1a64c8">更多方案</div>


<div class="t" style="left:664px;top:201px;font-size:21px;color:#ff2121">勾选即显示该模块菜单</div>
<div class="t" style="left:189px;top:282px;font-size:21px;color:#ff2121">员工账号菜单显示</div>
<div class="t" style="left:148px;top:387px;font-size:21px;color:#ff2121">对应这里菜单的显示</div>
<svg style="left:0;top:0" width="1920" height="982" viewBox="0 0 1920 982"><polygon points="191.7,262.8 250.9,218.4 251.0,223.9 256.3,211.3 242.8,213.6 248.1,214.9 191.3,262.4" fill="#ff2121"/><polygon points="267.6,213.2 499.3,263.3 495.3,266.4 508.0,262.8 497.8,254.5 500.2,258.9 267.8,212.8" fill="#ff2121"/><polygon points="649.9,198.1 550.5,258.3 551.1,253.2 544.6,264.7 557.8,263.8 552.9,262.2 650.1,198.5" fill="#ff2121"/><polygon points="224.3,426.9 161.8,548.5 159.5,543.8 160.1,556.9 170.9,549.4 165.8,550.5 224.7,427.1" fill="#ff2121"/><rect x="256.5" y="150.5" width="158" height="53" rx="3" fill="none" stroke="#ff2121" stroke-width="3"/><rect x="67" y="570" width="98" height="260" rx="3" fill="none" stroke="#ff2121" stroke-width="3"/></svg>
</body></html>
